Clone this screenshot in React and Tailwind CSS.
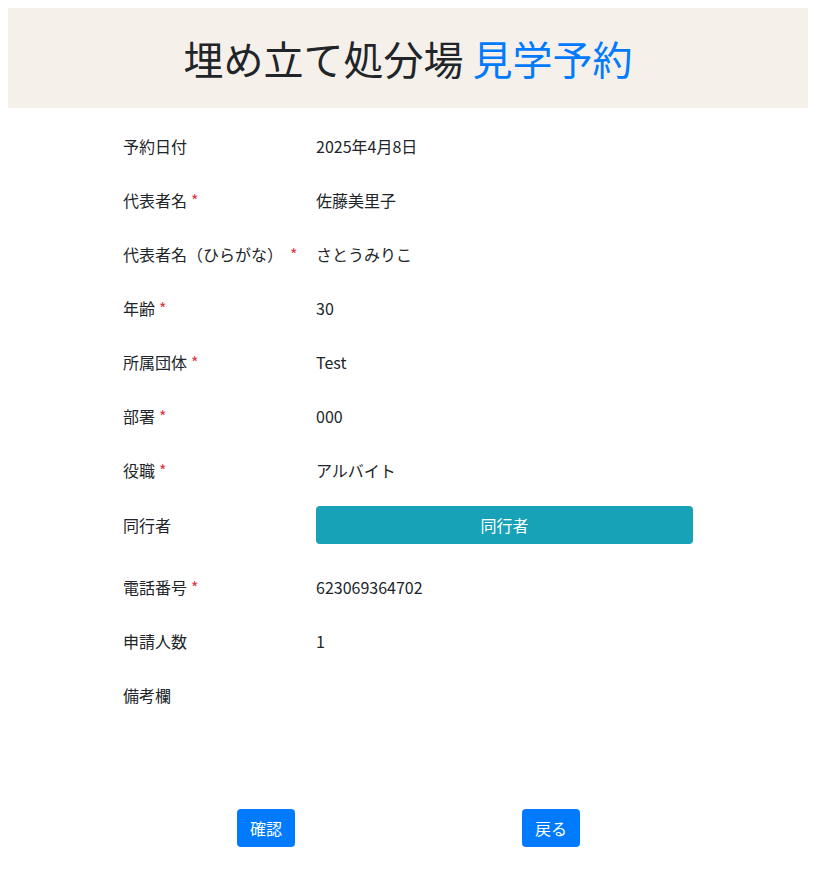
const rows = [
  { label: '予約日付', value: '2025年4月8日' },
  { label: '代表者名', required: true, value: '佐藤美里子' },
  { label: '代表者名（ひらがな）', required: true, value: 'さとうみりこ', gap: true },
  { label: '年齢', required: true, value: '30' },
  { label: '所属団体', required: true, value: 'Test' },
  { label: '部署', required: true, value: '000' },
  { label: '役職', required: true, value: 'アルバイト' },
];

const rows2 = [
  { label: '電話番号', required: true, value: '623069364702' },
  { label: '申請人数', value: '1' },
  { label: '備考欄', value: '' },
];

function Row({ label, required, value, gap }) {
  return (
    <div className="flex h-[54px] items-center">
      <div className="w-[193px] shrink-0">
        {label}
        {required && (
          <span className={`text-[#dc3545] ${gap ? 'ml-[7px]' : 'ml-1'}`}>*</span>
        )}
      </div>
      <div>{value}</div>
    </div>
  );
}

export default function App() {
  return (
    <div
      className="min-h-[891px] bg-white text-[16px] text-[#212529]"
      style={{ fontFamily: '"Noto Sans CJK JP", "Noto Sans", sans-serif' }}
    >
      <div className="ml-2 mt-2 flex h-[100px] w-[800px] items-center justify-center bg-[#f5f0ea]">
        <h1 className="text-[40px] leading-none">
          埋め立て処分場 <span className="text-[#007bff]">見学予約</span>
        </h1>
      </div>

      <div className="ml-[123px] mt-[11px] w-[570px]">
        {rows.map(r => <Row key={r.label} {...r} />)}

        <div className="flex h-[63px] items-start pt-[9px]">
          <div className="flex h-[38px] w-[193px] shrink-0 items-center">同行者</div>
          <button className="h-[38px] w-[377px] rounded bg-[#17a2b8] text-white">
            同行者
          </button>
        </div>

        {rows2.map(r => <Row key={r.label} {...r} />)}
      </div>

      <div className="mt-[87px] flex">
        <button className="ml-[237px] h-[38px] w-[58px] rounded bg-[#007bff] text-white">
          確認
        </button>
        <button className="ml-[227px] h-[38px] w-[58px] rounded bg-[#007bff] text-white">
          戻る
        </button>
      </div>
    </div>
  );
}
